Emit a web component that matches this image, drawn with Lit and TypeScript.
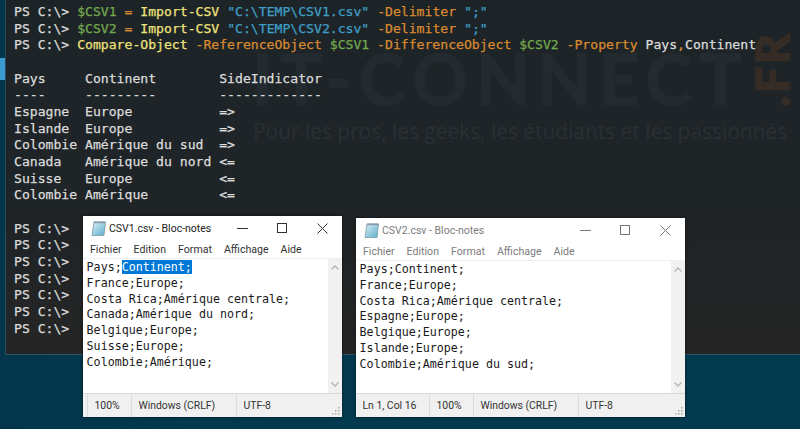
import { LitElement, html, css } from "lit";
import { customElement, property } from "lit/decorators.js";

type Seg = [string, string];
const P: Seg = ["t", "PS C:\\> "];
const importLine = (n: number): Seg[] => [
  P, ["g", `$CSV${n}`], ["t", " "], ["o", "="], ["t", " "], ["y", "Import-CSV"], ["t", " "],
  ["b", `"C:\\TEMP\\CSV${n}.csv"`], ["t", " "], ["o", "-Delimiter"], ["t", " "], ["b", '";"'],
];
const LINES: Seg[][] = [
  importLine(1),
  importLine(2),
  [P, ["y", "Compare-Object"], ["t", " "], ["o", "-ReferenceObject"], ["t", " "], ["g", "$CSV1"], ["t", " "],
    ["o", "-DifferenceObject"], ["t", " "], ["g", "$CSV2"], ["t", " "], ["o", "-Property"], ["t", " Pays"], ["o", ","], ["t", "Continent"]],
  [["t", ""]],
  [["t", "Pays     Continent        SideIndicator"]],
  [["t", "----     ---------        -------------"]],
  [["t", "Espagne  Europe           =>"]],
  [["t", "Islande  Europe           =>"]],
  [["t", "Colombie Amérique du sud  =>"]],
  [["t", "Canada   Amérique du nord <="]],
  [["t", "Suisse   Europe           <="]],
  [["t", "Colombie Amérique         <="]],
  [["t", ""]],
  [P], [P], [P], [P], [P], [P], [P],
];

@customElement("note-pad")
class NotePad extends LitElement {
  @property() name = "";
  @property({ type: Boolean }) inactive = false;
  @property({ type: Array }) lines: string[] = [];
  @property() pos = "";

  static styles = css`
    :host { display: flex; flex-direction: column; background: #fff; box-shadow: 0 0 3px rgba(0,0,0,.55);
      font-family: "Roboto", "Open Sans", sans-serif; color: #222; box-sizing: border-box; }
    .title { height: 24px; display: flex; align-items: center; padding-left: 8px; font-size: 10.5px; flex: none; }
    .title svg.ico { width: 16px; height: 17px; margin-right: 2px; flex: none; }
    .title .name { flex: 1; white-space: nowrap; }
    .ctl { width: 40px; height: 24px; display: flex; align-items: center; justify-content: center; flex: none; }
    .ctl svg { width: 11px; height: 11px; stroke: #333; fill: none; stroke-width: 1; }
    .inactive .name, .inactive .menu { color: #7c7c7c; }
    .inactive .ctl svg { stroke: #777; }
    .menu { height: 18px; display: flex; align-items: center; padding-left: 7px; gap: 12px; font-size: 10.6px; flex: none; color: #333; }
    .mid { flex: 1; display: flex; min-height: 0; border-top: 1px solid #f0f0f0; }
    pre { flex: 1; margin: 0; padding: 1px 0 0 3.6px; font: 11.67px/15.8px "DejaVu Sans Mono", monospace; color: #1a1a1a; }
    .sel { background: #0078d7; color: #fff; }
    .sb { width: 14px; background: #f1f1f1; display: flex; flex-direction: column; justify-content: space-between; align-items: center; padding: 6px 0; box-sizing: border-box; flex: none; }
    .sb svg { width: 8px; height: 5px; stroke: #b5b5b5; fill: none; stroke-width: 1.4; }
    .status { height: 24px; flex: none; background: #f0f0f0; border-top: 1px solid #d8d8d8; display: flex; font-size: 10.4px; color: #333; box-sizing: border-box; position: relative; }
    .cell { display: flex; align-items: center; padding-left: 6.5px; border-left: 1px solid #dcdcdc; box-sizing: border-box; white-space: nowrap; }
    .cell:first-child { border-left: 0; }
    .grip { position: absolute; right: 2px; bottom: 2px; width: 8px; height: 8px; }
    .body { flex: 1; display: flex; flex-direction: column; min-height: 0; }
  `;

  render() {
    const first = this.lines[0] ?? "";
    const selected = !this.inactive;
    return html`<div class="body ${this.inactive ? "inactive" : ""}">
      <div class="title">
        <svg class="ico" viewBox="0 0 16 17">
          <defs><linearGradient id="g" x1="0" y1="0" x2="1" y2="1"><stop offset="0" stop-color="#d9eff6"/><stop offset="1" stop-color="#5eaccb"/></linearGradient></defs>
          <path d="M3 2h11.5L13 15.5H1z" fill="url(#g)" stroke="#7d99a6" stroke-width=".8"/>
          <path d="M3.2 1.5h11v1.8h-11.2z" fill="#8a9ca6"/>
        </svg>
        <span class="name">${this.name} - Bloc-notes</span>
        <span class="ctl"><svg viewBox="0 0 11 11"><path d="M0 5.5h11" /></svg></span>
        <span class="ctl"><svg viewBox="0 0 11 11"><rect x=".5" y=".5" width="9" height="9" /></svg></span>
        <span class="ctl"><svg viewBox="0 0 11 11"><path d="M.5.5l10 10M10.5.5l-10 10" /></svg></span>
      </div>
      <div class="menu"><span>Fichier</span><span>Edition</span><span>Format</span><span>Affichage</span><span>Aide</span></div>
      <div class="mid">
        <pre>${selected ? html`Pays;<span class="sel">Continent;</span>` : first}
${this.lines.slice(1).join("\n")}</pre>
        <div class="sb">
          <svg viewBox="0 0 8 5"><path d="M.5 4.5L4 1l3.5 3.5" /></svg>
          <svg viewBox="0 0 8 5"><path d="M.5.5L4 4l3.5-3.5" /></svg>
        </div>
      </div>
      <div class="status">
        ${this.pos ? html`<div class="cell" style="width:73px">${this.pos}</div>` : html`<div class="cell" style="width:4px;padding:0"></div>`}
        <div class="cell" style="width:44px">100%</div>
        <div class="cell" style="width:105px">Windows (CRLF)</div>
        <div class="cell" style="flex:1">UTF-8</div>
        <svg class="grip" viewBox="0 0 8 8" fill="#a8a8a8">
          <rect x="6" y="0" width="1.5" height="1.5"/><rect x="3" y="3" width="1.5" height="1.5"/><rect x="6" y="3" width="1.5" height="1.5"/>
          <rect x="0" y="6" width="1.5" height="1.5"/><rect x="3" y="6" width="1.5" height="1.5"/><rect x="6" y="6" width="1.5" height="1.5"/>
        </svg>
      </div>
    </div>`;
  }
}

@customElement("app-root")
class AppRoot extends LitElement {
  static styles = css`
    :host { display: block; width: 800px; height: 429px; position: relative; overflow: hidden;
      background: linear-gradient(90deg, #03364b, #033a50 50%, #023a50); }
    .side { position: absolute; left: 0; top: 58px; width: 5px; height: 22px; background: #3b9ad0; }
    .term { margin-left: 5px; height: 355px; box-sizing: border-box; position: relative; overflow: hidden;
      background: linear-gradient(180deg, #1d2428 0%, #1f2427 60%, #252525 100%);
      border-left: 1px solid #2a4a58; border-bottom: 1px solid #2d5564; }
    .mark { position: absolute; left: 0; top: 0; width: 100%; height: 100%; }
    .logo { position: absolute; left: 246px; top: 43px; font: 700 70px/1 "Lato", "Open Sans", sans-serif;
      color: #232b30; letter-spacing: 7.5px; white-space: nowrap; -webkit-text-stroke: 1.5px #232b30; }
    .fr { position: absolute; left: 732px; top: 50px; font: 700 46px/1 "Lato", sans-serif; color: #352c25;
      letter-spacing: 3px; transform: rotate(-90deg); transform-origin: center; white-space: nowrap; -webkit-text-stroke: 2px #352c25; width: 68px; height: 46px; text-align: center; }
    .tag { position: absolute; left: 247px; top: 118px; font: 400 20.9px/1.3 "Open Sans", sans-serif; color: #2a3034; white-space: nowrap; }
    pre { position: relative; margin: 0; padding: 4px 0 0 8px; font: 13.11px/16.67px "DejaVu Sans Mono", monospace; -webkit-text-stroke: .25px currentColor; }
    .t { color: #dcdcdc; }
    .g { color: #74a94c; }
    .o { color: #d98a2f; }
    .y { color: #eee27a; }
    .b { color: #3f9fc7; }
    note-pad { position: absolute; }
    .n1 { left: 83px; top: 216px; width: 259px; height: 201px; }
    .n2 { left: 356px; top: 218px; width: 329px; height: 199px; }
  `;

  render() {
    return html`
      <div class="side"></div>
      <div class="term">
        <div class="mark">
          <div class="logo">IT-CONNECT</div>
          <div class="fr">.FR</div>
          <div class="tag">Pour les pros, les geeks, les étudiants et les passionnés</div>
        </div>
        <pre>${LINES.map((l, i) => html`${l.map(([c, s]) => html`<span class=${c}>${s}</span>`)}${i < LINES.length - 1 ? "\n" : ""}`)}</pre>
      </div>
      <note-pad class="n1" name="CSV1.csv" .lines=${["Pays;Continent;", "France;Europe;", "Costa Rica;Amérique centrale;", "Canada;Amérique du nord;", "Belgique;Europe;", "Suisse;Europe;", "Colombie;Amérique;"]}></note-pad>
      <note-pad class="n2" name="CSV2.csv" inactive pos="Ln 1, Col 16" .lines=${["Pays;Continent;", "France;Europe;", "Costa Rica;Amérique centrale;", "Espagne;Europe;", "Belgique;Europe;", "Islande;Europe;", "Colombie;Amérique du sud;"]}></note-pad>
    `;
  }
}
